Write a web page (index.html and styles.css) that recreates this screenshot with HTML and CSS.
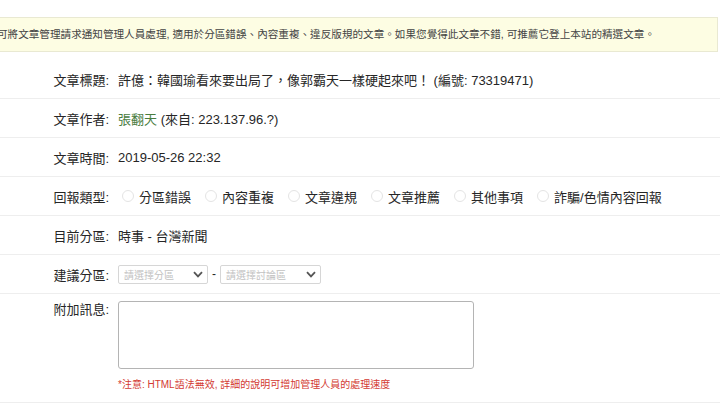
FILE: index.html
```html
<!DOCTYPE html>
<html lang="zh-Hant">
<head>
  <meta charset="UTF-8" />
  <title>文章回報</title>
  <link rel="stylesheet" href="styles.css">
</head>
<body>
  <div class="notice">可將文章管理請求通知管理人員處理, 適用於分區錯誤、內容重複、違反版規的文章。如果您覺得此文章不錯, 可推薦它登上本站的精選文章。</div>

  <form class="report">
    <div class="row">
      <div class="label">文章標題:</div>
      <div class="value">許億：韓國瑜看來要出局了，像郭霸天一樣硬起來吧！ (編號: 73319471)</div>
    </div>
    <div class="row">
      <div class="label">文章作者:</div>
      <div class="value"><span class="author">張翻天</span> (來自: 223.137.96.?)</div>
    </div>
    <div class="row">
      <div class="label">文章時間:</div>
      <div class="value">2019-05-26 22:32</div>
    </div>
    <div class="row">
      <div class="label">回報類型:</div>
      <div class="value options">
        <label class="option"><span class="radio"></span>分區錯誤</label>
        <label class="option"><span class="radio"></span>內容重複</label>
        <label class="option"><span class="radio"></span>文章違規</label>
        <label class="option"><span class="radio"></span>文章推薦</label>
        <label class="option"><span class="radio"></span>其他事項</label>
        <label class="option"><span class="radio"></span>詐騙/色情內容回報</label>
      </div>
    </div>
    <div class="row">
      <div class="label">目前分區:</div>
      <div class="value">時事 - 台灣新聞</div>
    </div>
    <div class="row">
      <div class="label">建議分區:</div>
      <div class="value selects">
        <div class="select select-board">請選擇分區
          <svg width="10" height="7" viewBox="0 0 10 7"><path d="M1 1.2L5 5.4L9 1.2" fill="none" stroke="#555" stroke-width="1.8"/></svg>
        </div>
        <span class="dash">-</span>
        <div class="select select-forum">請選擇討論區
          <svg width="10" height="7" viewBox="0 0 10 7"><path d="M1 1.2L5 5.4L9 1.2" fill="none" stroke="#555" stroke-width="1.8"/></svg>
        </div>
      </div>
    </div>
    <div class="row row-message">
      <div class="label">附加訊息:</div>
      <div class="value">
        <textarea class="message"></textarea>
        <div class="hint">*注意: HTML語法無效, 詳細的說明可增加管理人員的處理速度</div>
      </div>
    </div>
  </form>
</body>
</html>
```

FILE: styles.css
```css
:root {
  --text: #262626;
  --line: #eeeeee;
  --notice-bg: #fdfde3;
  --notice-border: #e9e9d2;
  --green: #4a7d3f;
  --red: #d33a32;
}

* {
  box-sizing: border-box;
  margin: 0;
  padding: 0;
}

body {
  font-family: 'Liberation Sans', 'Noto Sans CJK TC', sans-serif;
  color: var(--text);
  background: #ffffff;
  overflow: hidden;
}

.notice {
  margin: 17px 2px 8px -12px;
  padding-left: 8px;
  height: 35px;
  line-height: 33px;
  font-size: 10.6px;
  color: #444444;
  background-color: var(--notice-bg);
  border: 1px solid var(--notice-border);
  white-space: nowrap;
}

.row {
  display: flex;
  align-items: center;
  height: 39px;
  border-bottom: 1px solid var(--line);
  font-size: 13px;
}

.label {
  width: 110px;
  padding-right: 1px;
  text-align: right;
  flex-shrink: 0;
}

.value {
  margin-left: 8px;
  white-space: nowrap;
}

.author {
  color: var(--green);
}

.options {
  display: flex;
  align-items: center;
  margin-left: 12px;
}

.option {
  display: flex;
  align-items: center;
  margin-right: 14px;
}

.radio {
  width: 12px;
  height: 12px;
  margin-right: 5px;
  border: 1px solid #e4e4e4;
  border-radius: 50%;
}

.selects {
  display: flex;
  align-items: center;
}

.select {
  display: flex;
  align-items: center;
  justify-content: space-between;
  height: 19px;
  padding: 0 4px 0 5px;
  font-size: 10px;
  color: #c2c2c2;
  border: 1px solid #d6d6d6;
  border-radius: 2px;
}

.select-board {
  width: 90px;
}

.select-forum {
  width: 101px;
}

.dash {
  margin: 0 4px;
  font-size: 12px;
}

.row-message {
  align-items: flex-start;
  height: 109px;
  padding-top: 7px;
}

.row-message .label {
  line-height: 18px;
}

.message {
  display: block;
  width: 356px;
  height: 68px;
  border: 1px solid #b4b4b4;
  border-radius: 3px;
  resize: none;
}

.hint {
  margin-top: 7px;
  font-size: 10px;
  color: var(--red);
}
```
